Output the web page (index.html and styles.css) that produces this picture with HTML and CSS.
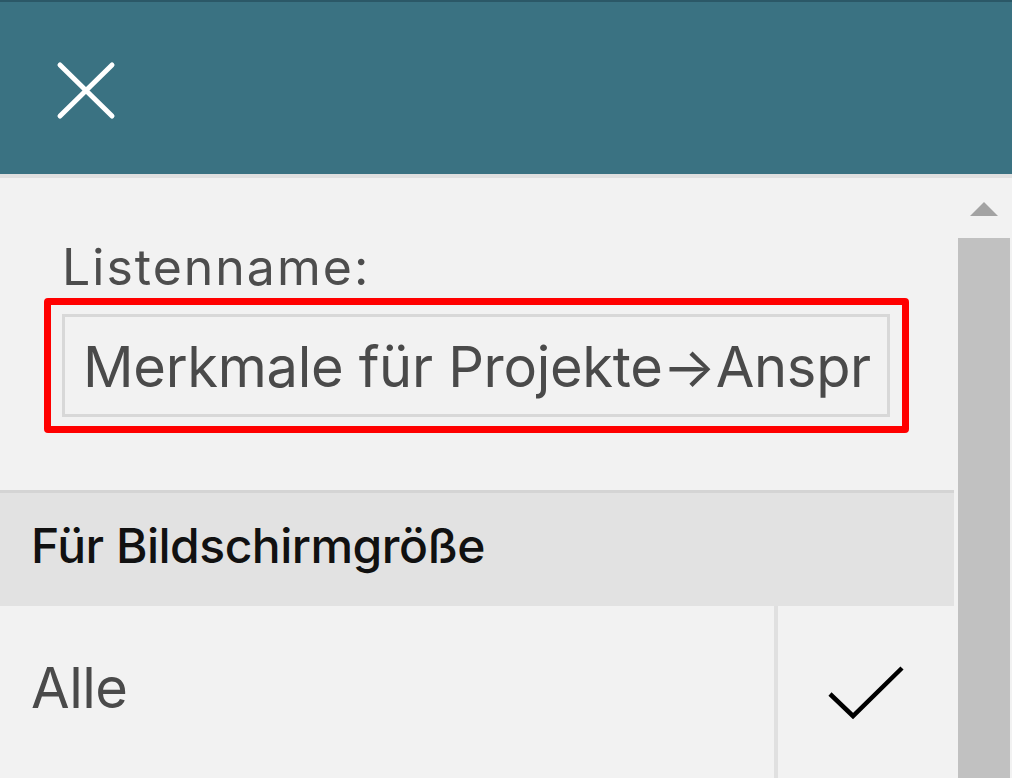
FILE: index.html
```html
<!DOCTYPE html>
<html lang="de">
<head>
<meta charset="utf-8">
<title>Liste</title>
<link rel="stylesheet" href="styles.css">
</head>
<body>
<header class="topbar">
  <button class="close" aria-label="Schließen">
    <svg width="60" height="60" viewBox="0 0 60 60"><path d="M4 5 L56 56 M56 5 L4 56" stroke="#fff" stroke-width="5" stroke-linecap="round" fill="none"/></svg>
  </button>
</header>
<div class="main">
  <div class="content">
    <div class="form">
      <div class="label">Listenname:</div>
      <div class="highlight">
        <div class="field">Merkmale für Projekte→Anspr</div>
      </div>
    </div>
    <div class="section">Für Bildschirmgröße</div>
    <div class="row">
      <div class="row-label">Alle</div>
      <div class="row-check">
        <svg width="80" height="60" viewBox="0 0 80 60"><path d="M4 28 L27 50 L76 2" stroke="#000" stroke-width="4.5" fill="none" stroke-linejoin="miter"/></svg>
      </div>
    </div>
  </div>
  <div class="scrollbar">
    <svg class="arrow" width="28" height="14" viewBox="0 0 28 14"><path d="M14 0 L28 14 L0 14 Z" fill="#a3a3a3"/></svg>
    <div class="thumb"></div>
  </div>
</div>
</body>
</html>
```
FILE: styles.css
```css
html, body {
  margin: 0;
  padding: 0;
  height: 100%;
}
body {
  background: #f2f2f2;
  font-family: Inter, "Noto Sans", sans-serif;
  overflow: hidden;
}
.topbar {
  height: 172px;
  background: #3a7282;
  border-top: 2px solid #2b5867;
  border-bottom: 4px solid #e0e0e0;
  display: flex;
  align-items: center;
}
.close {
  margin-left: 56px;
  margin-top: 3px;
  padding: 0;
  border: 0;
  background: none;
  display: flex;
}
.main {
  display: flex;
  height: 600px;
}
.content {
  width: 954px;
  display: flex;
  flex-direction: column;
}
.form {
  padding: 60px 0 0 44px;
}
.label {
  font-size: 50px;
  line-height: 58px;
  color: #4d4d4d;
  padding-left: 18px;
  letter-spacing: 2px;
  margin-bottom: 2px;
}
.highlight {
  width: 828px;
  border: 7px solid #ff0000;
  border-radius: 4px;
  padding: 9px 12px 9px 11px;
}
.field {
  border: 3px solid #d8d8d8;
  line-height: 97px;
  padding: 2px 10px 0 18px;
  box-sizing: border-box;
  height: 103px;
  font-size: 56px;
  color: #4a4a4a;
  white-space: nowrap;
  overflow: hidden;
  letter-spacing: -0.3px;
}
.section {
  margin-top: 57px;
  border-top: 3px solid #d4d4d4;
  background: #e2e2e2;
  font-size: 48px;
  font-weight: 500;
  line-height: 105px;
  padding: 0 0 8px 31px;
  color: #111;
  letter-spacing: -0.5px;
}
.row {
  display: flex;
  height: 172px;
}
.row-label {
  flex: 1;
  font-size: 56px;
  line-height: 165px;
  color: #4a4a4a;
  padding-left: 31px;
  border-right: 4px solid #e0e0e0;
  letter-spacing: -0.5px;
}
.row-check {
  width: 176px;
  display: flex;
  justify-content: center;
  align-items: flex-start;
  padding-top: 60px;
  box-sizing: border-box;
}
.scrollbar {
  width: 58px;
  display: flex;
  flex-direction: column;
  align-items: center;
}
.arrow {
  margin-top: 24px;
  margin-left: 2px;
}
.thumb {
  margin-top: 22px;
  width: 52px;
  margin-left: 2px;
  flex: 1;
  background: #c1c1c1;
}
```
